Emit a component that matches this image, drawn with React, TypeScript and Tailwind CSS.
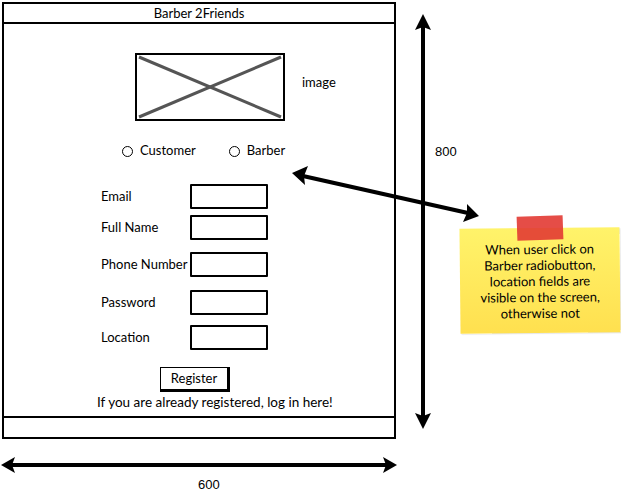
import React from "react";

const fields = [
  { label: "Email", mt: "mt-[24px]" },
  { label: "Full Name", mt: "mt-[6px]" },
  { label: "Phone Number", mt: "mt-[12px]" },
  { label: "Password", mt: "mt-[13px]" },
  { label: "Location", mt: "mt-[10px]" },
];

const Radio: React.FC<{ label: string }> = ({ label }) => (
  <div className="flex items-center gap-[7px]">
    <span className="w-[11px] h-[11px] rounded-full border-[1.5px] border-black" />
    <span>{label}</span>
  </div>
);

const App: React.FC = () => {
  return (
    <div
      className="relative w-[621px] h-[495px] bg-white text-[13px] text-black overflow-hidden"
      style={{ fontFamily: "Lato, 'Open Sans', sans-serif" }}
    >
      <div className="pt-[2px] pl-[2px]">
        {/* Wireframe window */}
        <div className="w-[394px] h-[437px] border-2 border-black flex flex-col">
          <div className="h-[20px] border-b-2 border-black flex items-center justify-center leading-none">
            Barber 2Friends
          </div>

          <div className="flex-1 flex flex-col">
            {/* Image placeholder */}
            <div className="flex items-center mt-[29px]">
              <div className="ml-[131px] w-[150px] h-[68px] border-2 border-black">
                <svg width="146" height="64" viewBox="0 0 146 64">
                  <line x1="2" y1="2" x2="144" y2="62" stroke="#555" strokeWidth="3" />
                  <line x1="2" y1="62" x2="144" y2="2" stroke="#555" strokeWidth="3" />
                </svg>
              </div>
              <span className="ml-[17px] -mt-[9px]">image</span>
            </div>

            {/* Role */}
            <div className="flex items-center mt-[21px] ml-[118px] gap-[33px] h-[18px]">
              <Radio label="Customer" />
              <Radio label="Barber" />
            </div>

            {/* Form */}
            <div className="flex flex-col ml-[97px]">
              {fields.map((f) => (
                <div key={f.label} className={`flex items-center ${f.mt}`}>
                  <span className="w-[89px] whitespace-nowrap">{f.label}</span>
                  <div className="w-[78px] h-[25px] border-2 border-black rounded-[1px]" />
                </div>
              ))}
            </div>

            <div className="mt-[17px] ml-[156px] w-[70px] h-[25px] border border-black border-r-[3px] border-b-[3px] flex items-center justify-center">
              Register
            </div>
            <div className="mt-[1px] ml-[93px] leading-[18px] text-[13.5px]">
              If you are already registered, log in here!
            </div>
          </div>

          <div className="h-[21px] border-t-2 border-black" />
        </div>
      </div>

      {/* Annotations */}
      <svg className="absolute inset-0 pointer-events-none" width="621" height="495" viewBox="0 0 621 495">
        {/* vertical 800 */}
        <line x1="423" y1="26" x2="423" y2="416" stroke="#000" strokeWidth="4" />
        <polygon points="423,14 431,30 423,27 415,30" fill="#000" />
        <polygon points="423,429 431,413 423,416 415,413" fill="#000" />
        {/* horizontal 600 */}
        <line x1="12" y1="465" x2="386" y2="465" stroke="#000" strokeWidth="4" />
        <polygon points="1,465 15,457 12,465 15,473" fill="#000" />
        <polygon points="397,465 383,457 386,465 383,473" fill="#000" />
        {/* diagonal */}
        <line x1="303" y1="176" x2="468" y2="213" stroke="#000" strokeWidth="4" />
        <polygon points="292,173 308,166 304,176 305,185" fill="#000" />
        <polygon points="479,216 463,222 467,213 467,204" fill="#000" />
      </svg>

      <div className="absolute left-[435px] top-[142px] text-[13px]" style={{ fontFamily: "'Liberation Sans', Arial, sans-serif" }}>
        800
      </div>
      <div className="absolute left-[198px] top-[475px] text-[13px]" style={{ fontFamily: "'Liberation Sans', Arial, sans-serif" }}>
        600
      </div>

      {/* Sticky note */}
      <div className="absolute left-[460px] top-[228px] w-[160px] h-[105px] bg-gradient-to-b from-[#fff36a] to-[#ffe04f] -rotate-[0.6deg] shadow-[1px_1px_1px_rgba(0,0,0,0.1)] flex flex-col items-center justify-center text-[13px] leading-[16px] text-center">
        When user click on
        <br />
        Barber radiobutton,
        <br />
        location fields are
        <br />
        visible on the screen,
        <br />
        otherwise not
      </div>
      <div className="absolute left-[517px] top-[216px] w-[46px] h-[24px] bg-[#e23a33] opacity-90 -rotate-[2deg]" />
    </div>
  );
};

export default App;
